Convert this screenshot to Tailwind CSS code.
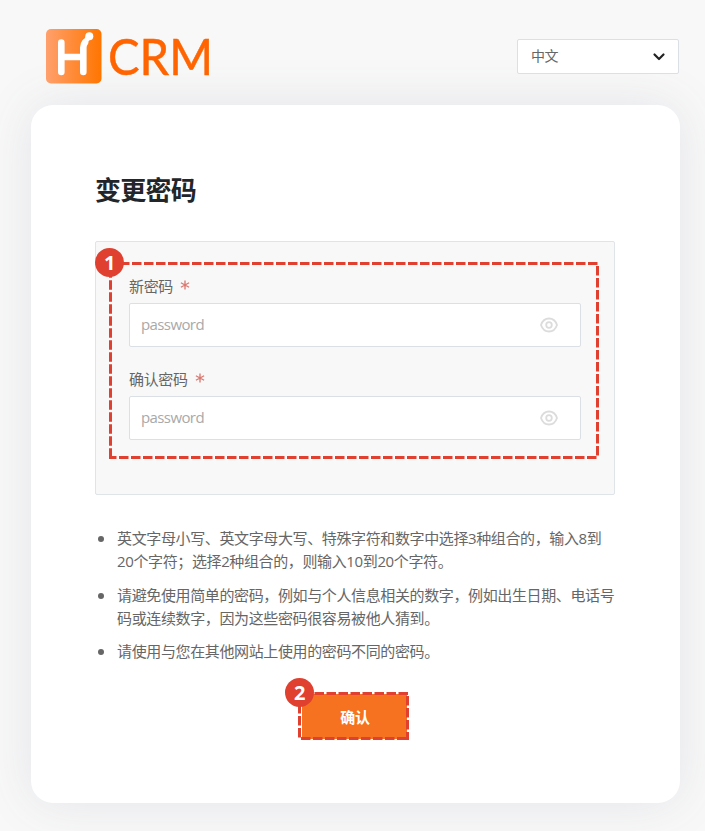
<!DOCTYPE html>
<html lang="zh-CN">
<head>
<meta charset="utf-8">
<title>变更密码</title>
<script src="https://cdn.jsdelivr.net/npm/@tailwindcss/browser@4"></script>
</head>
<body class="h-[831px] w-[705px] overflow-hidden bg-[#f8f8f8] font-['Open_Sans','Noto_Sans_CJK_SC',sans-serif] tracking-[-0.025em] text-[15px] text-[#666]">
<header class="flex h-[105px] items-start justify-between pr-[26px] pl-[46px]">
  <div class="relative z-10 mt-[29px] flex">
    <svg class="h-[60px] w-[180px] overflow-visible" viewBox="0 0 180 60">
      <defs><linearGradient id="g" x1="0" y1="0" x2="1" y2="0"><stop offset="0" stop-color="#ffa06c"/><stop offset="1" stop-color="#ff7500"/></linearGradient></defs>
      <rect width="55.5" height="54.500" rx="5" fill="url(#g)"/>
      <path d="M15.3 13.600V43M15.3 28H37M37.3 43V18.500Q37.3 15.500 39 13.500" fill="none" stroke="#fff" stroke-width="6.600" stroke-linecap="round" stroke-linejoin="round"/>
      <path d="M38.500 13.500L43.300 7.200" stroke="#fff" stroke-width="5"/>
      <circle cx="43.300" cy="7.200" r="4" fill="#fff"/>
      <text x="62" y="46" font-family="Lato, sans-serif" font-size="50" letter-spacing="0" textLength="105" lengthAdjust="spacingAndGlyphs" fill="#ff6400" stroke="#ff6400" stroke-width=".5">CRM</text>
    </svg>
  </div>
  <div class="relative z-10 mt-[39px] flex h-[35px] w-[162px] items-center justify-between rounded-[2px] border border-[#dbe0e6] bg-white pr-[12px] pl-[13px]">
    <span class="pb-[1px] text-sm leading-5">中文</span>
    <svg class="h-[10px] w-[14px]" viewBox="0 0 14 10" fill="none" stroke="#222" stroke-width="2.2" stroke-linecap="round" stroke-linejoin="round"><path d="M2.5 2.5 7 7l4.500-4.500"/></svg>
  </div>
</header>
<main class="ml-[31px] flex h-[698px] w-[649px] flex-col rounded-[22px] bg-white px-[64px] pt-[66px] shadow-[0_0_50px_rgba(90,100,130,0.13)]">
  <h1 class="h-[70px] text-[26px] leading-[39px] font-bold tracking-[-0.03em] text-[#22262a]">变更密码</h1>
  <section class="relative h-[254px] w-[520px] rounded-[2px] border border-[#dfe4e9] bg-[#f8f8f8] pt-[33px] pl-[33px]">
    <label class="flex h-[28px] items-start leading-[22px]">新密码<svg class="mt-[5px] ml-[7px] size-[10px]" viewBox="0 0 11 11" stroke="#d97a72" stroke-width="1.5"><path d="M5.500 .5v10M1 3l9 5M10 3 1 8"/></svg></label>
    <div class="flex h-[44px] w-[452px] items-center justify-between rounded-[2px] border border-[#dbe0e6] bg-white pr-[22px] pl-[11px]">
      <span class="pb-[2px] tracking-[-0.04em] text-[#a9a9a9]">password</span>
      <svg class="h-[16px] w-[18px]" viewBox="0 0 18 16" fill="none" stroke="#dcdcdc" stroke-width="1.8"><path d="M1 8C2.500 3.500 6 1.500 9 1.500S15.500 3.500 17 8C15.500 12.500 12 14.500 9 14.500S2.500 12.500 1 8Z"/><circle cx="9" cy="8" r="2.800"/></svg>
    </div>
    <label class="mt-[21px] flex h-[28px] items-start leading-[22px]">确认密码<svg class="mt-[5px] ml-[7px] size-[10px]" viewBox="0 0 11 11" stroke="#d97a72" stroke-width="1.5"><path d="M5.500 .5v10M1 3l9 5M10 3 1 8"/></svg></label>
    <div class="flex h-[44px] w-[452px] items-center justify-between rounded-[2px] border border-[#dbe0e6] bg-white pr-[22px] pl-[11px]">
      <span class="pb-[2px] tracking-[-0.04em] text-[#a9a9a9]">password</span>
      <svg class="h-[16px] w-[18px]" viewBox="0 0 18 16" fill="none" stroke="#dcdcdc" stroke-width="1.8"><path d="M1 8C2.500 3.500 6 1.500 9 1.500S15.500 3.500 17 8C15.500 12.500 12 14.500 9 14.500S2.500 12.500 1 8Z"/><circle cx="9" cy="8" r="2.800"/></svg>
    </div>
    <svg class="absolute top-[20px] left-[13px] h-[197px] w-[490px]" viewBox="0 0 490 197" fill="none" stroke="#df402f" stroke-width="3" stroke-dasharray="9.500 2.500">
      <path d="M-1 1.500H490M488.500 4V194M1.500 6.300V197M-2 195.500H490"/>
    </svg>
    <span class="absolute top-[6px] left-[-1px] flex size-[29px] items-center justify-center rounded-full bg-[#df402f] pt-[1px] text-[20px] leading-none font-bold text-white">1</span>
  </section>
  <ul class="mt-[32px] flex w-[525px] flex-col gap-[10.500px] leading-[23px] whitespace-nowrap">
    <li class="flex"><i class="mt-[9px] mr-[13px] ml-[3px] size-[6px] rounded-full bg-[#666]"></i><p>英文字母小写、英文字母大写、特殊字符和数字中选择3种组合的，输入8到<br>20个字符；选择2种组合的，则输入10到20个字符。</p></li>
    <li class="flex"><i class="mt-[9px] mr-[13px] ml-[3px] size-[6px] rounded-full bg-[#666]"></i><p>请避免使用简单的密码，例如与个人信息相关的数字，例如出生日期、电话号<br>码或连续数字，因为这些密码很容易被他人猜到。</p></li>
    <li class="flex"><i class="mt-[9px] mr-[13px] ml-[3px] size-[6px] rounded-full bg-[#666]"></i><p>请使用与您在其他网站上使用的密码不同的密码。</p></li>
  </ul>
  <div class="relative mt-[29px] ml-[203px] h-[48px] w-[111px] pt-[2px] pl-[4px]">
    <button class="flex h-[45px] w-[105px] items-center justify-center bg-[#f67220] pt-[1px] pl-[1px] font-bold tracking-[-0.025em] text-white">确认</button>
    <svg class="absolute inset-0 h-[48px] w-[111px]" viewBox="0 0 111 48" fill="none" stroke="#df402f" stroke-width="3" stroke-dasharray="9.500 2.500"><path d="M4.500 1.500H111M109.500 4V48M1.500 0V48M3 46.500H111"/></svg>
    <span class="absolute top-[-14px] left-[-13px] flex size-[29px] items-center justify-center rounded-full bg-[#df402f] pt-[1px] text-[20px] leading-none font-bold text-white">2</span>
  </div>
</main>
</body>
</html>
